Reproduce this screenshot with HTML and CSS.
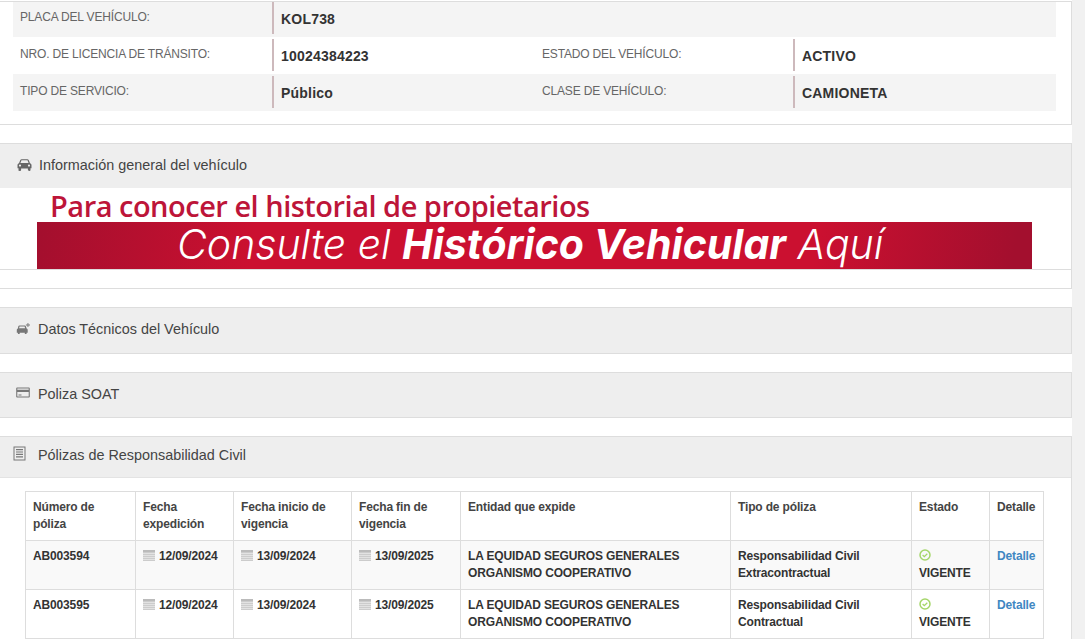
FILE: index.html
```html
<!DOCTYPE html>
<html lang="es">
<head>
    <meta charset="UTF-8">
    <meta name="viewport" content="width=device-width, initial-scale=1.0">
    <title>Consulta de vehículo</title>
    <link rel="stylesheet" href="styles.css">
</head>
<body>
    <div class="page">
        <section class="panel panel-data">
            <div class="data-row first shaded">
                <div class="data-label">PLACA DEL VEHÍCULO:</div>
                <div class="data-value">KOL738</div>
            </div>
            <div class="data-row">
                <div class="data-label">NRO. DE LICENCIA DE TRÁNSITO:</div>
                <div class="data-value">10024384223</div>
                <div class="data-label">ESTADO DEL VEHÍCULO:</div>
                <div class="data-value">ACTIVO</div>
            </div>
            <div class="data-row shaded">
                <div class="data-label">TIPO DE SERVICIO:</div>
                <div class="data-value">Público</div>
                <div class="data-label">CLASE DE VEHÍCULO:</div>
                <div class="data-value">CAMIONETA</div>
            </div>
        </section>

        <section class="panel panel-general">
            <h2 class="panel-heading heading-general">
                <svg class="icon" width="15" height="12" viewBox="0 0 15 12"><path fill="#666" d="M3.2 1.2C3.5.5 4 .2 4.700.2h5.600c.7 0 1.200.3 1.500 1l1.200 3c.9.2 1.500.9 1.500 1.800v3.200h-1V11c0 .5-.4.900-1 .9h-.6c-.6 0-1-.4-1-.9V9.600H4.100V11c0 .5-.4.900-1 .9h-.6c-.6 0-1-.4-1-.9V9.200H.5V6c0-.9.6-1.600 1.500-1.800zM3.400 4.100h8.200L10.700 1.700c-.1-.3-.3-.4-.6-.4H4.900c-.3 0-.5.100-.6.400zM3 5.500a1.100 1.100 0 100 2.200 1.100 1.100 0 000-2.200zm9 0a1.100 1.100 0 100 2.200 1.100 1.100 0 000-2.200z"/></svg>
                Información general del vehículo
            </h2>
            <a class="banner" href="#">
                <div class="banner-title">Para conocer el historial de propietarios</div>
                <div class="banner-bar">Consulte el <b>Histórico Vehicular</b> Aquí</div>
            </a>
        </section>

        <div class="panel panel-empty"></div>

        <section class="panel panel-tech">
            <h2 class="panel-heading heading-tech">
                <svg class="icon" width="14" height="11" viewBox="0 0 14 11"><path fill="#777" d="M2.300 3.200C2.500 2.700 2.900 2.400 3.400 2.400h5.400c.5 0 .9.300 1.100.8l.7 2.200c.7.200 1.100.8 1.100 1.400v2.900h-1.100v1c0 .2-.2.300-.4.300h-1c-.2 0-.4-.1-.4-.3v-1H3.700v1c0 .2-.2.300-.4.300h-1c-.2 0-.4-.1-.4-.3v-1H.8V6.800c0-.6.400-1.200 1.100-1.400zM3.100 5.200h6L8.600 3.500H3.600z"/><path fill="#777" d="M11.500 0h.9v1.600H14v.9h-1.600v1.600h-.9V2.500H9.900v-.9h1.600z"/></svg>
                Datos Técnicos del Vehículo
            </h2>
        </section>

        <section class="panel panel-soat">
            <h2 class="panel-heading heading-soat">
                <svg class="icon" width="14" height="11" viewBox="0 0 14 11"><path fill="#777" fill-rule="evenodd" d="M1.300.5h11.400c.6 0 1.100.5 1.100 1.100v7.800c0 .6-.5 1.100-1.100 1.100H1.300C.7 10.500.2 10 .2 9.400V1.600C.2 1 .7.500 1.300.5zM1.300 1.500v1.300h11.400V1.500zM1.300 5v4.500h11.400V5zM2.500 7.500h3v1h-3z"/></svg>
                Poliza SOAT
            </h2>
        </section>

        <section class="panel panel-policies">
            <h2 class="panel-heading heading-policies">
                <svg class="icon" width="13" height="15" viewBox="0 0 13 15"><path fill="#777" fill-rule="evenodd" d="M.5.500h12v14H.5zM1.500 1.500v12h10v-12zM3 3h7v1.200H3zM3 5.400h7v1.200H3zM3 7.800h7V9H3zM3 10.200h7v1.200H3z"/></svg>
                Pólizas de Responsabilidad Civil
            </h2>
            <div class="table-wrap">
                <table class="policy-table">
                    <colgroup>
                        <col class="col-number"><col class="col-issued"><col class="col-start"><col class="col-end">
                        <col class="col-entity"><col class="col-type"><col class="col-state"><col class="col-detail">
                    </colgroup>
                    <thead>
                        <tr>
                            <th>Número de póliza</th>
                            <th>Fecha expedición</th>
                            <th>Fecha inicio de vigencia</th>
                            <th>Fecha fin de vigencia</th>
                            <th>Entidad que expide</th>
                            <th>Tipo de póliza</th>
                            <th>Estado</th>
                            <th>Detalle</th>
                        </tr>
                    </thead>
                    <tbody>
                        <tr class="striped">
                            <td>AB003594</td>
                            <td><span class="cal"></span>12/09/2024</td>
                            <td><span class="cal"></span>13/09/2024</td>
                            <td><span class="cal"></span>13/09/2025</td>
                            <td>LA EQUIDAD SEGUROS GENERALES ORGANISMO COOPERATIVO</td>
                            <td>Responsabilidad Civil Extracontractual</td>
                            <td><svg class="check" width="12" height="12" viewBox="0 0 12 12"><circle cx="6" cy="6" r="5" fill="none" stroke="#a5d66a" stroke-width="1.500"/><path d="M3.600 6l1.700 1.700 3-3" fill="none" stroke="#a5d66a" stroke-width="1.300"/></svg><br>VIGENTE</td>
                            <td><a class="detail-link" href="#">Detalle</a></td>
                        </tr>
                        <tr>
                            <td>AB003595</td>
                            <td><span class="cal"></span>12/09/2024</td>
                            <td><span class="cal"></span>13/09/2024</td>
                            <td><span class="cal"></span>13/09/2025</td>
                            <td>LA EQUIDAD SEGUROS GENERALES ORGANISMO COOPERATIVO</td>
                            <td>Responsabilidad Civil Contractual</td>
                            <td><svg class="check" width="12" height="12" viewBox="0 0 12 12"><circle cx="6" cy="6" r="5" fill="none" stroke="#a5d66a" stroke-width="1.500"/><path d="M3.600 6l1.700 1.700 3-3" fill="none" stroke="#a5d66a" stroke-width="1.300"/></svg><br>VIGENTE</td>
                            <td><a class="detail-link" href="#">Detalle</a></td>
                        </tr>
                        <tr>
                            <td>&nbsp;</td><td></td><td></td><td></td><td></td><td></td><td></td><td></td>
                        </tr>
                    </tbody>
                </table>
            </div>
        </section>
    </div>
</body>
</html>
```

FILE: styles.css
```css
html, body {
    height: 639px;
    overflow: hidden;
}

body {
    margin: 0;
    background: #f1f1f1;
    font-family: 'Liberation Sans', Arial, sans-serif;
    color: #333;
    font-size: 14px;
}

.page {
    width: 1072px;
    height: 639px;
    background: #fff;
    overflow: hidden;
}

.panel {
    border-right: 1px solid #ddd;
    border-bottom: 1px solid #ddd;
    background: #fff;
}

.panel-data {
    border-top: 1px solid #ddd;
    margin-top: 1px;
    padding: 0 15px 13px 13px;
    height: 109px;
}

.data-row {
    display: grid;
    grid-template-columns: 252px 270px 251px 1fr;
    height: 37px;
    padding: 2px 0 0 7px;
    box-sizing: border-box;
}

.data-row.first {
    height: 35px;
    padding-top: 0;
}

.data-row.shaded {
    background: #f4f4f4;
}

.data-label {
    font-size: 12px;
    letter-spacing: -0.17px;
    color: #666;
    padding-top: 6px;
    line-height: 18px;
}

.data-value {
    height: 32px;
    border-left: 2px solid #cdb9bc;
    box-sizing: border-box;
    padding: 8px 0 0 7px;
    font-size: 14px;
    line-height: 18px;
    font-weight: bold;
    letter-spacing: 0.2px;
}

.panel-heading {
    margin: 0;
    background: #eee;
    border-top: 1px solid #ddd;
    font-size: 14.4px;
    font-weight: normal;
    color: #444;
    display: flex;
    align-items: center;
    box-sizing: border-box;
}

.icon {
    flex: none;
    margin-right: 8px;
}

.panel-general {
    margin-top: 18px;
    height: 126px;
}

.heading-general {
    height: 45px;
    padding: 0 0 3px 17px;
}

.heading-general .icon {
    margin-right: 7px;
}

.banner {
    display: block;
    padding: 3px 0 0 37px;
    text-decoration: none;
}

.banner-title {
    padding-left: 13px;
    font-family: 'Open Sans', sans-serif;
    font-weight: 600;
    font-size: 29px;
    line-height: 30px;
    letter-spacing: -0.5px;
    color: #bd1539;
}

.banner-bar {
    width: 995px;
    height: 47px;
    margin-top: 1px;
    box-sizing: border-box;
    padding-left: 140px;
    background: linear-gradient(100deg, #a30f2e 0, #cb1030 22%, #cb1030 78%, #a30f2e 98%);
    font-family: Inter, sans-serif;
    font-style: italic;
    font-weight: 300;
    font-size: 41px;
    line-height: 45px;
    color: #fff;
    white-space: nowrap;
}

.banner-bar b {
    font-weight: 700;
}

.panel-empty {
    height: 18px;
}

.panel-tech {
    margin-top: 18px;
    height: 46px;
}

.heading-tech {
    height: 46px;
    padding: 0 0 4px 16px;
}

.panel-soat {
    margin-top: 18px;
    height: 45px;
}

.heading-soat {
    height: 45px;
    padding: 0 0 3px 16px;
}

.heading-soat .icon {
    margin-bottom: 3px;
}

.panel-policies {
    margin-top: 18px;
    border-bottom: none;
}

.heading-policies {
    height: 42px;
    padding: 0 0 5px 13px;
    border-bottom: 1px solid #e3e3e3;
}

.heading-policies .icon {
    margin-right: 12px;
    margin-bottom: 2px;
}

.table-wrap {
    padding: 13px 27px 0 25px;
}

.policy-table {
    width: 1018px;
    table-layout: fixed;
    border-collapse: collapse;
    font-size: 12px;
    line-height: 17px;
    letter-spacing: -0.15px;
}

.col-number { width: 110px; }
.col-issued { width: 98px; }
.col-start { width: 118px; }
.col-end { width: 109px; }
.col-entity { width: 270px; }
.col-type { width: 181px; }
.col-state { width: 78px; }
.col-detail { width: 54px; }

.policy-table th,
.policy-table td {
    border: 1px solid #ddd;
    padding: 7px;
    vertical-align: top;
    text-align: left;
    font-weight: bold;
    color: #333;
}

.policy-table th {
    height: 34px;
    color: #444;
}

.policy-table td {
    height: 34px;
}

.striped td {
    background: #f9f9f9;
}

.cal {
    display: inline-block;
    width: 12px;
    height: 11px;
    margin: 0 4px -1px 0;
    background: repeating-linear-gradient(#ccc 0 1px, #e2e2e2 1px 2px);
    border-top: 2px solid #bbb;
    box-sizing: border-box;
}

.check {
    vertical-align: top;
    margin-top: 1px;
}

.policy-table .detail-link {
    color: #3f87c2;
    font-weight: bold;
    text-decoration: none;
}
```
